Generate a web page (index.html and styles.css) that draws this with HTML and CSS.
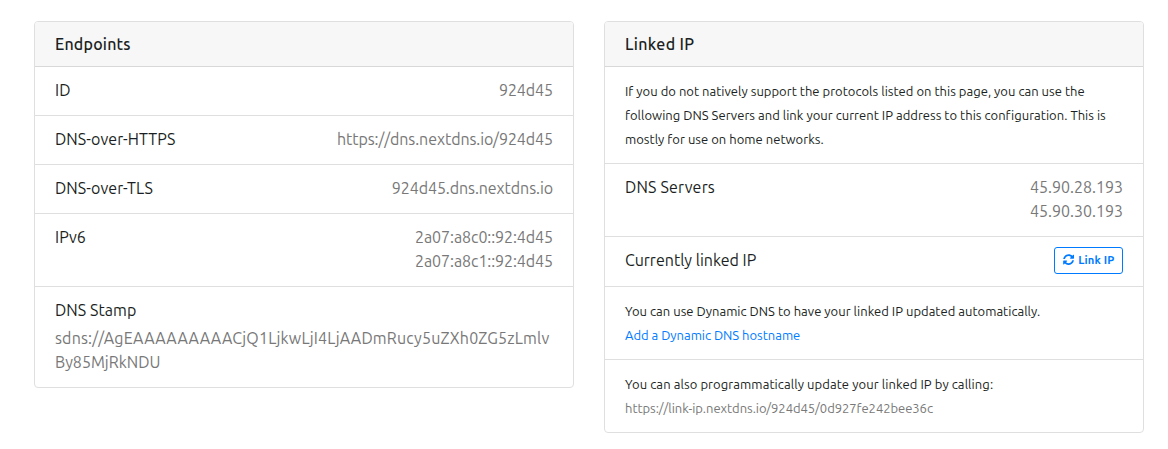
FILE: index.html
```html
<!DOCTYPE html>
<html lang="en">
<head>
<meta charset="utf-8">
<title>Endpoints</title>
<link rel="stylesheet" href="styles.css">
</head>
<body>
<main class="grid">
  <section class="card">
    <h2 class="card-header">Endpoints</h2>
    <div class="row"><span class="label">ID</span><span class="value">924d45</span></div>
    <div class="row"><span class="label">DNS-over-HTTPS</span><span class="value">https://dns.nextdns.io/924d45</span></div>
    <div class="row"><span class="label">DNS-over-TLS</span><span class="value">924d45.dns.nextdns.io</span></div>
    <div class="row"><span class="label">IPv6</span><span class="value">2a07:a8c0::92:4d45<br>2a07:a8c1::92:4d45</span></div>
    <div class="row stacked"><span class="label">DNS Stamp</span><span class="value left"><span class="stamp">sdns://AgEAAAAAAAAACjQ1LjkwLjI4LjAADmRucy5uZXh0ZG5zLmlv</span><br>By85MjRkNDU</span></div>
  </section>
  <section class="card">
    <h2 class="card-header linked">Linked IP</h2>
    <div class="row small"><p>If you do not natively support the protocols listed on this page, you can use the<br>following DNS Servers and link your current IP address to this configuration. This is<br>mostly for use on home networks.</p></div>
    <div class="row"><span class="servers">DNS Servers</span><span class="value plain">45.90.28.193<br>45.90.30.193</span></div>
    <div class="row link-row"><span>Currently linked IP</span>
      <button class="btn" type="button"><svg class="icon" viewBox="0 0 512 512" aria-hidden="true"><path fill="currentColor" d="M370.72 133.28C339.458 104.008 298.888 87.962 255.848 88c-77.458.068-144.328 53.178-162.791 126.85-1.344 5.363-6.122 9.15-11.651 9.15H24.103c-7.498 0-13.194-6.807-11.807-14.176C33.933 94.924 134.813 8 256 8c66.448 0 126.791 26.136 171.315 68.685L463.03 40.97C478.149 25.851 504 36.559 504 57.941V192c0 13.255-10.745 24-24 24H345.941c-21.382 0-32.09-25.851-16.971-40.971l41.75-41.749zM32 296h134.059c21.382 0 32.09 25.851 16.971 40.971l-41.75 41.75c31.262 29.273 71.835 45.319 114.876 45.28 77.418-.07 144.315-53.144 162.787-126.849 1.344-5.363 6.122-9.15 11.651-9.15h57.304c7.498 0 13.194 6.807 11.807 14.176C478.067 417.076 377.187 504 256 504c-66.448 0-126.791-26.136-171.315-68.685L48.97 471.03C33.851 486.149 8 475.441 8 454.059V320c0-13.255 10.745-24 24-24z"/></svg><span>Link IP</span></button>
    </div>
    <div class="row small"><p>You can use Dynamic DNS to have your linked IP updated automatically.<br><a class="link" href="#">Add a Dynamic DNS hostname</a></p></div>
    <div class="row small"><p><span class="calling">You can also programmatically update your linked IP by calling:</span><br><span class="value">https://link-ip.nextdns.io/924d45/0d927fe242bee36c</span></p></div>
  </section>
</main>
</body>
</html>
```
FILE: styles.css
```css
* { box-sizing: border-box; }
body {
  margin: 0;
  background: #fff;
  color: #1b1f23;
  font: 16px/24px Ubuntu, "Noto Sans", sans-serif;
}
.grid {
  display: grid;
  grid-template-columns: 540px 540px;
  gap: 30px;
  align-items: start;
  padding: 21px 24px 0 34px;
}
.card {
  border: 1px solid #dfdfdf;
  border-radius: 4px;
  overflow: hidden;
}
.card-header {
  margin: 0;
  padding: 10px 20px;
  height: 45px;
  background: #f7f7f7;
  border-bottom: 1px solid #d8d8d8;
  font-size: 16px;
  font-weight: 500;
  letter-spacing: 0.2px;
}
.linked { letter-spacing: 0.35px; }
.row {
  display: flex;
  justify-content: space-between;
  padding: 11px 20px 13px;
  white-space: nowrap;
}
.row + .row { border-top: 1px solid #dfdfdf; }
.label { letter-spacing: 0.07px; }
.servers { letter-spacing: 0.18px; }
.value { color: #787878; text-align: right; letter-spacing: -0.07px; }
.plain { letter-spacing: 0; }
.stacked { flex-direction: column; gap: 4px; }
.left { text-align: left; letter-spacing: 0; }
.stamp { letter-spacing: 0.18px; }
.small {
  padding: 12px 20px;
  font-size: 13px;
  letter-spacing: 0.02px;
}
.small p { margin: 0; }
.small .value { letter-spacing: -0.04px; }
.link { color: #007bff; text-decoration: none; letter-spacing: -0.02px; }
.calling { letter-spacing: 0.08px; }
.link-row { height: 50px; padding-bottom: 12px; }
.btn {
  display: flex;
  align-items: center;
  gap: 4px;
  width: 69px;
  height: 27px;
  margin-top: -1px;
  padding: 0 0 1px 8px;
  border: 1px solid #007bff;
  border-radius: 3px;
  background: #fff;
  color: #007bff;
  font: 700 11.2px/24px Ubuntu, "Noto Sans", sans-serif;
  letter-spacing: 0.15px;
}
.icon { width: 11.2px; height: 11.2px; margin-bottom: 1px; }
```
